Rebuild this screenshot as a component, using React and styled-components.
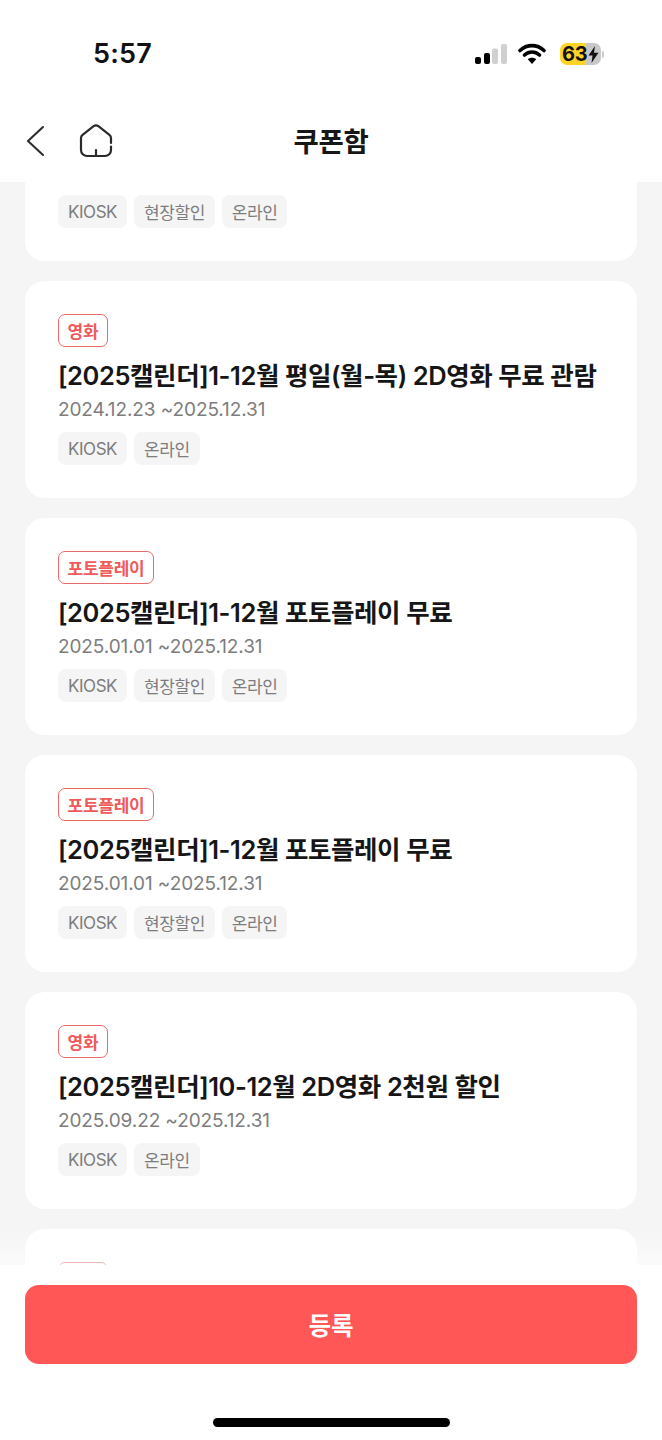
import React from "react";
import styled, { createGlobalStyle } from "styled-components";

const Global = createGlobalStyle`
  html, body { margin: 0; padding: 0; background: #fff; }
  * { box-sizing: border-box; }
  body { font-family: Inter, "Noto Sans CJK KR", sans-serif; }
`;
const Page = styled.div`
  width: 662px; height: 1440px; display: flex; flex-direction: column; background: #f5f5f5; overflow: hidden;
`;
const StatusBar = styled.div`
  height: 100px; flex: none; background: #fff; display: flex; align-items: flex-start; justify-content: space-between;
  padding: 37px 58px 0 93px;
`;
const Clock = styled.div`
  font-size: 27px; line-height: 34px; font-weight: 600; color: #111; letter-spacing: 0.2px;
`;
const StatusIcons = styled.div`
  display: flex; align-items: center; gap: 11px; height: 34px;
`;
const Battery = styled.div`
  width: 41px; height: 22px; border-radius: 7px; overflow: hidden;
  background: linear-gradient(90deg, #ffd426 0 63%, #c8c8c8 63% 100%);
  display: flex; align-items: center; padding-left: 2px;
  font-size: 20px; font-weight: 700; color: #111; letter-spacing: -0.2px; line-height: 22px;
`;
const BatteryWrap = styled.div`
  display: flex; align-items: center; gap: 1px; margin-left: 3px;
`;
const BatteryCap = styled.div`
  width: 2px; height: 7px; border-radius: 0 2px 2px 0; background: #c8c8c8;
`;
const Header = styled.header`
  height: 82px; flex: none; background: #fff; display: flex; align-items: center; padding: 0 24px;
  position: relative;
`;
const IconGroup = styled.div`
  display: flex; align-items: center; gap: 31px; margin-top: -1px;
`;
const Title = styled.h1`
  position: absolute; left: 0; right: 0; top: 1px; margin: 0; height: 82px; line-height: 82px; text-align: center;
  font-size: 27.5px; font-weight: 700; color: #171717; letter-spacing: -0.3px;
`;
const Scroll = styled.main`
  flex: 1; min-height: 0; overflow: hidden; position: relative;
`;
const List = styled.div`
  display: flex; flex-direction: column; gap: 20px; padding: 0 25px; margin-top: -138px;
`;
const Fade = styled.div`
  position: absolute; left: 0; right: 0; bottom: 0; height: 38px;
  background: linear-gradient(180deg, rgba(255,255,255,0), rgba(255,255,255,0.55));
`;
const Card = styled.article`
  height: 217px; background: #fff; border-radius: 20px; padding: 33px 33px 0; display: flex; flex-direction: column;
  align-items: flex-start;
`;
const Badge = styled.span`
  height: 33px; padding: 0 8.5px; border: 1.6px solid #e86a6a; border-radius: 7px; display: inline-flex; align-items: center;
  font-size: 17px; font-weight: 600; color: #ef5a5a; letter-spacing: -0.25px;
`;
const CardTitle = styled.h2`
  margin: 13px 0 0; font-size: 25.5px; line-height: 32px; font-weight: 600; color: #161616; letter-spacing: -0.42px; white-space: nowrap;
`;
const Dates = styled.div`
  margin-top: 6px; font-size: 19px; line-height: 24px; color: #7d7d7d; letter-spacing: -0.1px;
`;
const Chips = styled.div`
  margin-top: 10px; display: flex; gap: 7px;
`;
const Chip = styled.span`
  height: 33px; padding: 0 10px; border-radius: 8px; background: #f5f5f5; display: inline-flex; align-items: center;
  font-size: 17px; color: #7d7d7d; letter-spacing: -0.45px;
`;
const Footer = styled.footer`
  height: 175px; flex: none; background: #fff; padding: 20px 25px 0; display: flex; flex-direction: column; align-items: center;
`;
const Submit = styled.button`
  width: 100%; height: 79px; border: 0; border-radius: 14px; background: #ff5656; color: #fff; font-family: inherit;
  font-size: 24.5px; font-weight: 700; padding: 0;
`;
const HomeBar = styled.div`
  width: 237px; height: 9px; border-radius: 5px; background: #000; margin-top: 54px;
`;

const cards = [
  { tag: "포토플레이", title: "[2025캘린더]1-12월 포토플레이 무료", date: "2025.01.01 ~2025.12.31", chips: ["KIOSK", "현장할인", "온라인"] },
  { tag: "영화", title: "[2025캘린더]1-12월 평일(월-목) 2D영화 무료 관람", date: "2024.12.23 ~2025.12.31", chips: ["KIOSK", "온라인"] },
  { tag: "포토플레이", title: "[2025캘린더]1-12월 포토플레이 무료", date: "2025.01.01 ~2025.12.31", chips: ["KIOSK", "현장할인", "온라인"] },
  { tag: "포토플레이", title: "[2025캘린더]1-12월 포토플레이 무료", date: "2025.01.01 ~2025.12.31", chips: ["KIOSK", "현장할인", "온라인"] },
  { tag: "영화", title: "[2025캘린더]10-12월 2D영화 2천원 할인", date: "2025.09.22 ~2025.12.31", chips: ["KIOSK", "온라인"] },
  { tag: "영화", title: "[2025캘린더]10-12월 2D영화 2천원 할인", date: "2025.09.22 ~2025.12.31", chips: ["KIOSK", "온라인"] },
];

export default function App() {
  return (
    <Page>
      <Global />
      <StatusBar>
        <Clock>5:57</Clock>
        <StatusIcons>
          <svg width="32" height="22" viewBox="0 0 32 22">
            <rect x="0" y="14" width="6" height="7" rx="2" fill="#000" />
            <rect x="9" y="10" width="6" height="11" rx="2" fill="#000" />
            <rect x="17" y="5.5" width="6" height="15.5" rx="2" fill="#d0d0d0" />
            <rect x="26" y="1" width="6" height="20" rx="2" fill="#d0d0d0" />
          </svg>
          <svg width="28" height="22" viewBox="0 0 28 22" fill="none">
            <path d="M2 7.5 C9 1 19 1 26 7.5" stroke="#000" strokeWidth="3.6" strokeLinecap="round" />
            <path d="M6.5 12 C11 8 17 8 21.5 12" stroke="#000" strokeWidth="3.6" strokeLinecap="round" />
            <path d="M14 21 L9.8 16.2 C12 14.2 16 14.2 18.2 16.2 Z" fill="#000" />
          </svg>
          <BatteryWrap>
            <Battery>
              63
              <svg width="11" height="17" viewBox="0 0 11 17">
                <path d="M7 0 L0.5 9.5 H4.5 L3.5 17 L10.5 6.8 H6 Z" fill="#111" />
              </svg>
            </Battery>
            <BatteryCap />
          </BatteryWrap>
        </StatusIcons>
      </StatusBar>
      <Header>
        <Title>쿠폰함</Title>
        <IconGroup>
          <svg width="24" height="32" viewBox="0 0 24 32" fill="none">
            <path d="M19 2 L4 16 L19 30" stroke="#2a2a2a" strokeWidth="2" strokeLinecap="round" strokeLinejoin="round" />
          </svg>
          <svg width="34" height="34" viewBox="0 0 34 34" fill="none">
            <path d="M32 19 V14 a4 4 0 0 0 -1.6 -3.2 L19.4 2.2 a4 4 0 0 0 -4.8 0 L3.6 10.8 a4 4 0 0 0 -1.6 3.2 V26 a6 6 0 0 0 6 6 H26 a6 6 0 0 0 6 -6 V22.5" stroke="#2a2a2a" strokeWidth="2.2" strokeLinejoin="round" strokeLinecap="round" />
            <path d="M17 26 V32" stroke="#2a2a2a" strokeWidth="2.2" strokeLinecap="round" />
          </svg>
        </IconGroup>
      </Header>
      <Scroll>
        <List>
          {cards.map((c, i) => (
            <Card key={i}>
              <Badge>{c.tag}</Badge>
              <CardTitle>{c.title}</CardTitle>
              <Dates>{c.date}</Dates>
              <Chips>
                {c.chips.map((t) => (
                  <Chip key={t}>{t}</Chip>
                ))}
              </Chips>
            </Card>
          ))}
        </List>
        <Fade />
      </Scroll>
      <Footer>
        <Submit>등록</Submit>
        <HomeBar />
      </Footer>
    </Page>
  );
}
